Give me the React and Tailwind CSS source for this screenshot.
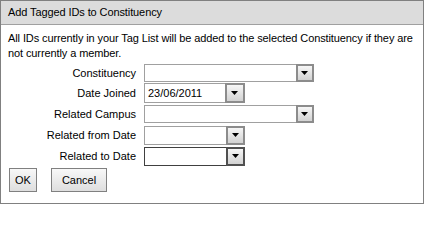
import React from "react";

function Arrow() {
  return (
    <svg width="8" height="5" viewBox="0 0 8 5" className="block">
      <polygon points="0,0 7,0 3.5,4" fill="#000" />
    </svg>
  );
}

function Select({ width, height, value, dark }) {
  return (
    <div
      className={`flex bg-white border ${dark ? "border-[#404040]" : "border-[#a0a0a0]"}`}
      style={{ width, height }}
    >
      <div className="flex-1 pl-[3px] text-[11px] leading-none flex items-center text-black">{value}</div>
      <div
        className={`h-full -my-px -mr-px border-2 ${dark ? "border-[#505050]" : "border-[#8c8c8c]"} bg-gradient-to-b from-[#f6f6f6] to-[#d2d2d2] flex items-center justify-center`}
        style={{ height: height, width: height }}
      >
        <Arrow />
      </div>
    </div>
  );
}

function Row({ label, children, mt, h }) {
  return (
    <div className="flex items-center" style={{ marginTop: mt, height: h }}>
      <div className="w-[135px] text-right text-[11px] leading-none">{label}</div>
      <div className="ml-[8px]">{children}</div>
    </div>
  );
}

export default function App() {
  return (
    <div
      className="w-[424px] h-[204px] border border-[#808080] bg-white flex flex-col text-black"
      style={{ fontFamily: '"Liberation Sans", Arial, sans-serif' }}
    >
      <div className="h-[24px] bg-[#dcdcdc] border-b border-[#a0a0a0] px-[7px] text-[11px] leading-[23px] tracking-[-0.1px] shrink-0">
        Add Tagged IDs to Constituency
      </div>
      <div className="pl-[7px] pr-[2px] pt-[6px] text-[11px] leading-[15px] tracking-[-0.1px]">
        All IDs currently in your Tag List will be added to the selected Constituency if they are not currently a member.
      </div>
      <div>
        <Row label="Constituency" mt={3} h={18}>
          <Select width={170} height={18} value="" />
        </Row>
        <Row label="Date Joined" mt={1} h={20}>
          <Select width={101} height={20} value="23/06/2011" />
        </Row>
        <Row label="Related Campus" mt={2} h={18}>
          <Select width={170} height={18} value="" />
        </Row>
        <Row label="Related from Date" mt={3} h={19}>
          <Select width={101} height={19} value="" />
        </Row>
        <Row label="Related to Date" mt={2} h={19}>
          <Select width={101} height={19} value="" dark />
        </Row>
      </div>
      <div className="flex gap-[14px] pl-[8px] mt-[2px]">
        <button className="w-[28px] h-[24px] border border-[#808080] bg-gradient-to-b from-[#f8f8f8] to-[#dedede] text-[11px] leading-none">
          OK
        </button>
        <button className="w-[56px] h-[24px] border border-[#808080] bg-gradient-to-b from-[#f8f8f8] to-[#dedede] text-[11px] leading-none">
          Cancel
        </button>
      </div>
    </div>
  );
}
